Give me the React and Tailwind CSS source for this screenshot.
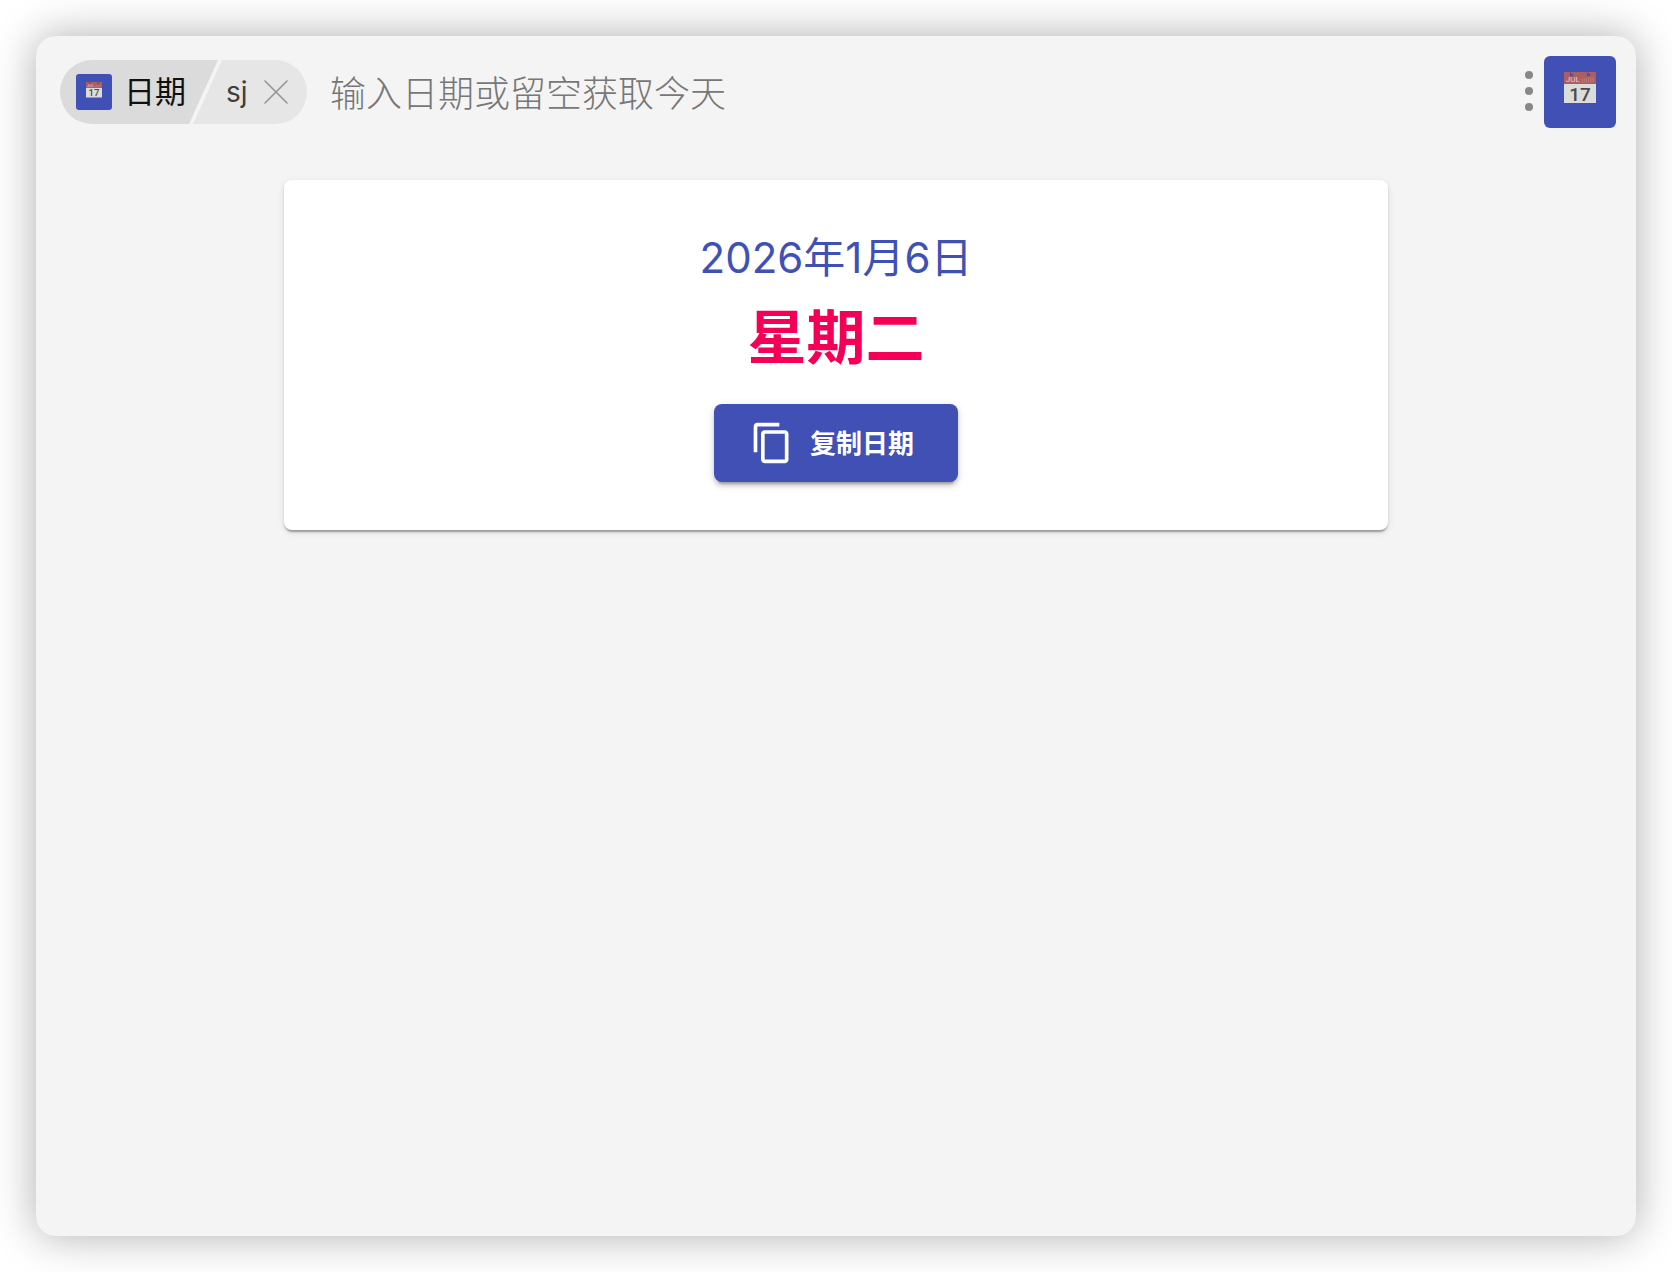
import { useState } from "react";

const CalendarIcon = ({ className }) => {
    return (
        <svg viewBox="0 0 72 72" className={className} aria-hidden="true">
            <rect width="72" height="72" rx="6" fill="#4150b5" />
            <rect x="20" y="16" width="32" height="31" fill="#dcdcdc" />
            <rect x="20" y="16" width="32" height="12" fill="#ad5f60" />
            <circle cx="27.5" cy="18.8" r="1.6" fill="#4150b5" />
            <circle cx="44.5" cy="18.8" r="1.6" fill="#4150b5" />
            <path d="M26 16l1.5 3M42.5 16l2 3" stroke="#4150b5" strokeWidth="0.7" />
            <path d="M38 22.5v4.5M40.2 22v5M42.4 22v5M44.6 21.5v5M46.8 21.5v5M49 21v5" stroke="#c08384" strokeWidth="0.8" />
            <text x="21.8" y="25.8" fontSize="8" fill="#e2d3d3" fontFamily="Roboto, sans-serif">JUL</text>
            <text x="36" y="44.8" fontSize="19" fontWeight="500" fill="#4b4b4b" textAnchor="middle" fontFamily="Roboto, sans-serif">17</text>
        </svg>
    );
};

const CopyIcon = () => {
    return (
        <svg viewBox="0 0 24 24" fill="currentColor" className="size-11" aria-hidden="true">
            <path d="M16 1H4c-1.100 0-2 .9-2 2v14h2V3h12V1zm3 4H8c-1.100 0-2 .9-2 2v14c0 1.100.9 2 2 2h11c1.100 0 2-.9 2-2V7c0-1.100-.9-2-2-2zm0 16H8V7h11v14z" />
        </svg>
    );
};

// current plugin name + the keyword that opened it
const PluginTag = ({ name, keyword, onClose }) => {
    return (
        <div className="flex h-16 shrink-0 overflow-hidden rounded-full">
            <div className="flex w-[158px] items-center gap-3 bg-[#dbdbdb] pl-4 [clip-path:polygon(0_0,100%_0,129px_100%,0_100%)]">
                <CalendarIcon className="size-9" />
                <span className="text-[31px] leading-10 text-[#111111]">{name}</span>
            </div>
            <div className="-ml-[25px] flex w-[114px] items-center gap-4 bg-[#e6e6e6] pl-[33px] [clip-path:polygon(29px_0,100%_0,100%_100%,0_100%)]">
                <span className="text-[28px] leading-10 text-[#3f3f3f]">{keyword}</span>
                <button type="button" aria-label="关闭" onClick={onClose}>
                    <svg viewBox="0 0 24 24" className="size-6" stroke="#959595" strokeWidth="1.6" strokeLinecap="round">
                        <path d="M1 1l22 22M23 1L1 23" />
                    </svg>
                </button>
            </div>
        </div>
    );
};

const SearchBar = ({ value, setValue }) => {
    return (
        <header className="flex h-28 items-center pr-5 pl-6">
            <PluginTag name="日期" keyword="sj" onClose={() => setValue("")} />
            <input
                type="text"
                aria-label="日期"
                value={value}
                onChange={(e) => setValue(e.target.value)}
                placeholder="输入日期或留空获取今天"
                className="ml-[23px] h-16 min-w-0 flex-1 bg-transparent pt-1 text-[36px] font-light text-[#1c1c1c] outline-none placeholder:text-[#777777]"
            />
            <button type="button" aria-label="菜单" className="mr-[11px] flex flex-col gap-2 pb-0.5">
                <span className="size-2 rounded-full bg-[#888888]"></span>
                <span className="size-2 rounded-full bg-[#888888]"></span>
                <span className="size-2 rounded-full bg-[#888888]"></span>
            </button>
            <button type="button" aria-label="插件">
                <CalendarIcon className="size-18" />
            </button>
        </header>
    );
};

const DateCard = ({ date, weekday }) => {

    const copyDate = () => {
        navigator.clipboard.writeText(date);
    };

    return (
        <section className="flex flex-col items-center rounded-lg bg-white pt-[50px] pb-12 shadow-[0_4px_2px_-2px_rgba(0,0,0,0.2),0_2px_2px_rgba(0,0,0,0.14),0_2px_6px_rgba(0,0,0,0.12)]">
            <p className="text-[42px] leading-14 text-[#3f51b5]">{date}</p>
            <h1 className="mt-4 text-[59px] leading-18 font-bold text-[#f50057]">{weekday}</h1>
            <button
                type="button"
                onClick={copyDate}
                className="mt-[30px] flex h-[78px] items-center gap-4 rounded-lg bg-[#4150b5] pr-11 pl-9 text-[26px] font-bold text-white shadow-[0_6px_2px_-4px_rgba(0,0,0,0.2),0_4px_4px_rgba(0,0,0,0.14),0_2px_10px_rgba(0,0,0,0.12)]"
            >
                <CopyIcon />
                复制日期
            </button>
        </section>
    );
};

const App = () => {

    let [value, setValue] = useState("");

    return (
        <div className="flex min-h-screen bg-white p-9 font-[Inter,'Noto_Sans_CJK_SC',sans-serif]">
            <div className="flex-1 rounded-[20px] bg-[#f4f4f4] shadow-[0_0_44px_rgba(0,0,0,0.32)]">
                <SearchBar value={value} setValue={setValue} />
                <main className="mx-auto max-w-[1200px] px-12 py-8">
                    <DateCard date="2026年1月6日" weekday="星期二" />
                </main>
            </div>
        </div>
    );
};

export default App;
